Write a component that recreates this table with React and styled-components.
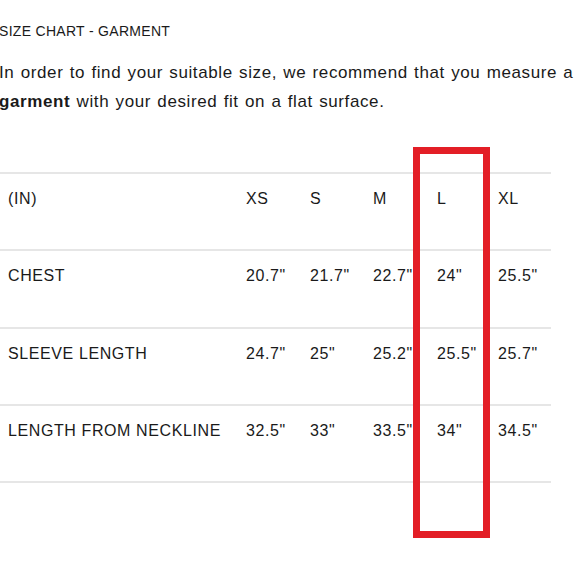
import React from "react";
import styled, { createGlobalStyle } from "styled-components";

const GlobalStyle = createGlobalStyle`
  body {
    margin: 0;
    background: #ffffff;
    font-family: "Liberation Sans", Arial, sans-serif;
    color: #1a1a1a;
  }
`;

const Page = styled.div`
  position: relative;
  width: 580px;
  height: 580px;
  overflow: hidden;
  padding-top: 22px;
  box-sizing: border-box;
`;

const Title = styled.h1`
  margin: 0 0 0 -1px;
  font-size: 14px;
  font-weight: normal;
  line-height: 18px;
  letter-spacing: 0.3px;
`;

const Intro = styled.p`
  margin: 18px 0 0 -1px;
  font-size: 17px;
  line-height: 29px;
  white-space: nowrap;
  letter-spacing: 0.6px;
  word-spacing: 1px;

  b {
    font-weight: bold;
  }
`;

const Table = styled.div`
  margin-top: 56px;
  width: 551px;
  border-top: 2px solid #e6e6e6;
`;

const Row = styled.div`
  display: grid;
  grid-template-columns: 238px 64px 63px 64px 61px 61px;
  height: 75.3px;
  border-bottom: 2px solid #e6e6e6;
`;

const Cell = styled.div`
  padding: 15px 0 0 8px;
  font-size: 16px;
  line-height: 20px;
  letter-spacing: 0.6px;
  white-space: nowrap;
`;

const Highlight = styled.div`
  position: absolute;
  left: 413px;
  top: 147px;
  width: 77px;
  height: 391px;
  box-sizing: border-box;
  border: 7px solid #e31e26;
  pointer-events: none;
`;

const sizes = ["XS", "S", "M", "L", "XL"];

const rows = [
  { label: "CHEST", values: ['20.7"', '21.7"', '22.7"', '24"', '25.5"'] },
  { label: "SLEEVE LENGTH", values: ['24.7"', '25"', '25.2"', '25.5"', '25.7"'] },
  { label: "LENGTH FROM NECKLINE", values: ['32.5"', '33"', '33.5"', '34"', '34.5"'] },
];

const App = () => {
  return (
    <Page>
      <GlobalStyle />
      <Title>SIZE CHART - GARMENT</Title>
      <Intro>
        In order to find your suitable size, we recommend that you measure a
        <br />
        <b>garment</b> with your desired fit on a flat surface.
      </Intro>
      <Table>
        <Row>
          <Cell>(IN)</Cell>
          {sizes.map((size) => (
            <Cell key={size}>{size}</Cell>
          ))}
        </Row>
        {rows.map((row) => (
          <Row key={row.label}>
            <Cell>{row.label}</Cell>
            {row.values.map((value, i) => (
              <Cell key={sizes[i]}>{value}</Cell>
            ))}
          </Row>
        ))}
      </Table>
      <Highlight />
    </Page>
  );
};

export default App;
